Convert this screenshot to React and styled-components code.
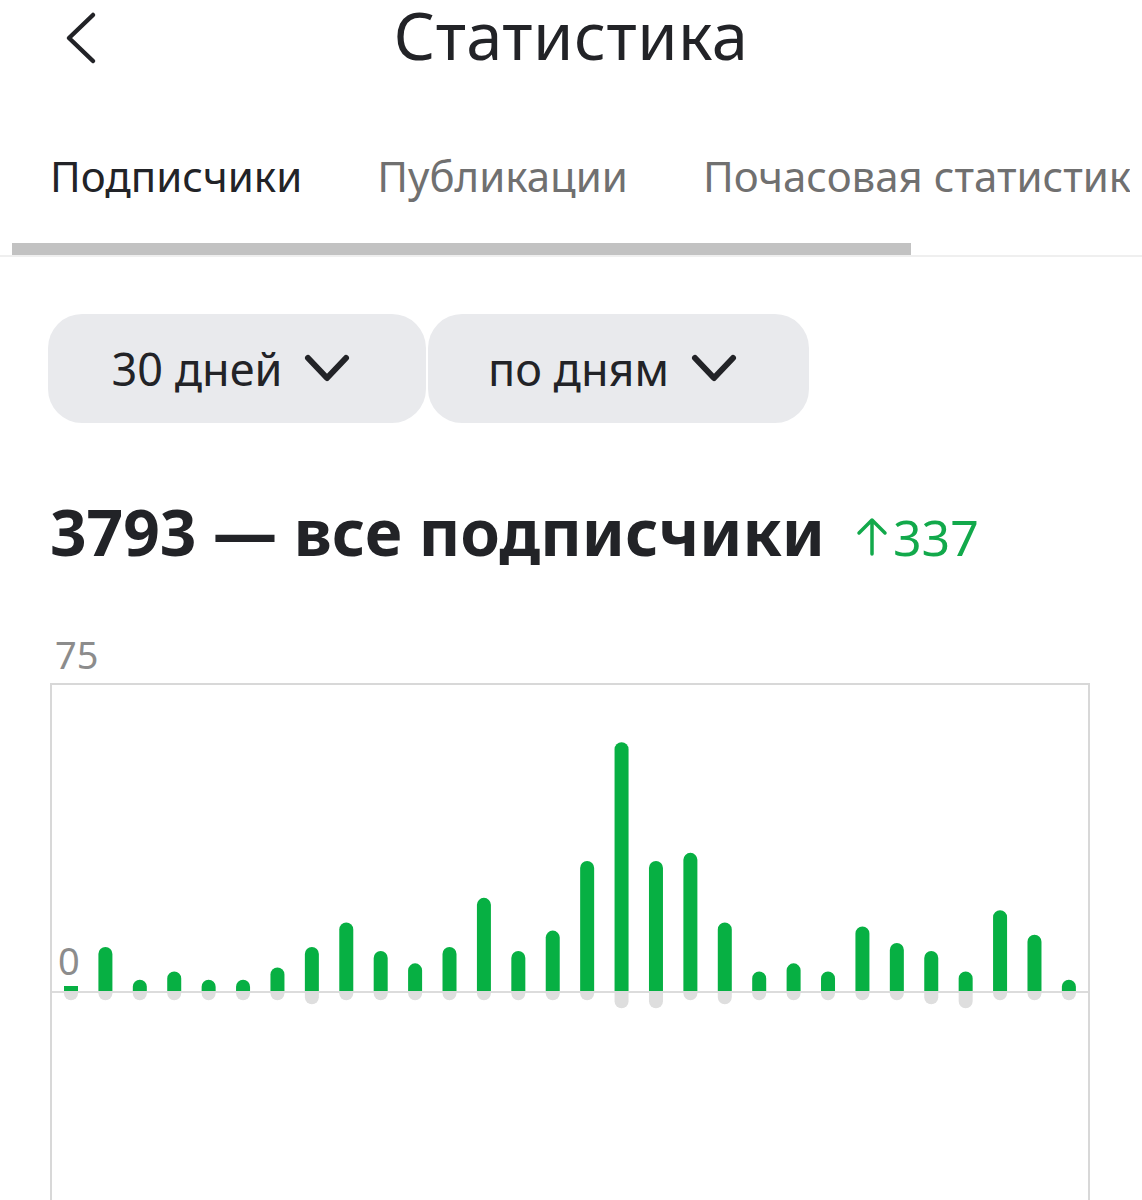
import React from 'react';
import styled, { createGlobalStyle } from 'styled-components';

const GlobalStyle = createGlobalStyle`
  body {
    margin: 0;
    background: #fff;
    font-family: 'Noto Sans', 'Open Sans', Arial, sans-serif;
    color: #222327;
  }
`;

const Page = styled.div`
  width: 1142px;
  overflow: hidden;
`;

const Header = styled.header`
  display: grid;
  grid-template-columns: 1fr auto 1fr;
  align-items: start;
  height: 76px;
`;

const BackButton = styled.button`
  justify-self: start;
  align-self: center;
  display: flex;
  align-items: center;
  margin-left: 62px;
  padding: 0;
  border: none;
  background: none;
  cursor: pointer;
`;

const Title = styled.h1`
  margin: 0;
  font-size: 65px;
  font-weight: 400;
  line-height: 71px;
  letter-spacing: 0.5px;
`;

const TabBar = styled.nav`
  border-bottom: 2px solid #efefef;
`;

const TabRow = styled.div`
  display: flex;
  gap: 75px;
  margin-right: 12px;
  padding: 71px 0 0 50px;
  white-space: nowrap;
  overflow: hidden;
`;

const Tab = styled.span`
  flex-shrink: 0;
  font-size: 42px;
  line-height: 1.4;
  color: ${(p) => (p.active ? '#222327' : '#707070')};
`;

const Indicator = styled.div`
  width: 899px;
  height: 12px;
  margin: 37px 0 0 12px;
  background: #c2c2c2;
`;

const Filters = styled.div`
  display: flex;
  gap: 2px;
  padding: 57px 0 0 48px;
`;

const Pill = styled.button`
  display: flex;
  align-items: center;
  justify-content: center;
  gap: 22px;
  width: ${(p) => p.width}px;
  height: 109px;
  padding: 0 12px 0 0;
  border: none;
  border-radius: 34px;
  background: #e9eaed;
  font-family: inherit;
  font-size: 45px;
  color: #222327;
  cursor: pointer;
`;

const Summary = styled.div`
  display: flex;
  align-items: baseline;
  gap: 30px;
  padding: 74px 0 0 50px;
`;

const Total = styled.h2`
  margin: 0;
  font-size: 64px;
  font-weight: 700;
  line-height: 1.1;
`;

const Growth = styled.span`
  display: flex;
  align-items: baseline;
  gap: 4px;
  font-size: 50px;
  line-height: 1.1;
  color: #12a94b;
`;

const Chart = styled.section`
  padding: 65px 0 0 50px;
`;

const AxisLabel = styled.div`
  font-size: 38px;
  line-height: 1.2;
  color: #8c8c8c;
  padding-left: 5px;
`;

const Frame = styled.div`
  position: relative;
  width: 1036px;
  height: 540px;
  margin-top: 5px;
  border: 2px solid #d8d8d8;
  border-bottom: none;
`;

const ZeroLabel = styled(AxisLabel)`
  position: absolute;
  left: 1px;
  top: 253px;
`;

const Chevron = () => (
  <svg width="46" height="28" viewBox="0 0 46 28" fill="none">
    <path d="M4 4 L23 24 L42 4" stroke="#222327" strokeWidth="6" strokeLinecap="round" strokeLinejoin="round" />
  </svg>
);

// new subscribers / unsubscribes per day
const days = [
  [1, 2], [11, 2], [3, 2], [5, 2], [3, 2], [3, 2], [6, 2], [11, 3], [17, 2], [10, 2],
  [7, 2], [11, 2], [23, 2], [10, 2], [15, 2], [32, 2], [61, 4], [32, 4], [34, 2], [17, 3],
  [5, 2], [7, 2], [5, 2], [16, 2], [12, 2], [10, 3], [5, 4], [20, 2], [14, 2], [3, 2],
];

const MAX = 75;
const ZERO = 307;
const STEP = 34.41;
const BAR = 14;

function Bars() {
  const k = ZERO / MAX;
  return (
    <svg width="1036" height="540" style={{ display: 'block' }}>
      {days.map(([plus, minus], i) => {
        const cx = 19 + i * STEP;
        const x = cx - BAR / 2;
        const h = plus * k;
        const down = Math.max(minus * k, 7);
        return (
          <g key={i}>
            <path
              d={`M${x} ${ZERO} V${ZERO + down - BAR / 2} A${BAR / 2} ${BAR / 2} 0 0 0 ${x + BAR} ${ZERO + down - BAR / 2} V${ZERO} Z`}
              fill="#dedede"
            />
            {h < 8 ? (
              <rect x={x} y={ZERO - 6} width={BAR} height={6} fill="#07b043" />
            ) : (
              <path
                d={`M${x} ${ZERO} V${ZERO - h + BAR / 2} A${BAR / 2} ${BAR / 2} 0 0 1 ${x + BAR} ${ZERO - h + BAR / 2} V${ZERO} Z`}
                fill="#07b043"
              />
            )}
          </g>
        );
      })}
      <line x1="0" x2="1036" y1={ZERO} y2={ZERO} stroke="#dcdcdc" strokeWidth="2" />
    </svg>
  );
}

export default function App() {
  return (
    <Page>
      <GlobalStyle />
      <Header>
        <BackButton aria-label="Назад">
          <svg width="36" height="54" viewBox="0 0 36 54" fill="none">
            <path d="M31 4 L7 27 L31 50" stroke="#222327" strokeWidth="4.5" strokeLinecap="round" strokeLinejoin="round" />
          </svg>
        </BackButton>
        <Title>Статистика</Title>
      </Header>

      <TabBar>
        <TabRow>
          <Tab active>Подписчики</Tab>
          <Tab>Публикации</Tab>
          <Tab>Почасовая статистика</Tab>
        </TabRow>
        <Indicator />
      </TabBar>

      <Filters>
        <Pill width={378}>
          30 дней <Chevron />
        </Pill>
        <Pill width={381}>
          по дням <Chevron />
        </Pill>
      </Filters>

      <Summary>
        <Total>3793 — все подписчики</Total>
        <Growth>
          <svg width="34" height="40" viewBox="0 0 34 40" fill="none">
            <path d="M17 38 V4 M4 17 L17 4 L30 17" stroke="#12a94b" strokeWidth="3.5" strokeLinecap="round" strokeLinejoin="round" />
          </svg>
          337
        </Growth>
      </Summary>

      <Chart>
        <AxisLabel>75</AxisLabel>
        <Frame>
          <ZeroLabel>0</ZeroLabel>
          <Bars />
        </Frame>
      </Chart>
    </Page>
  );
}
